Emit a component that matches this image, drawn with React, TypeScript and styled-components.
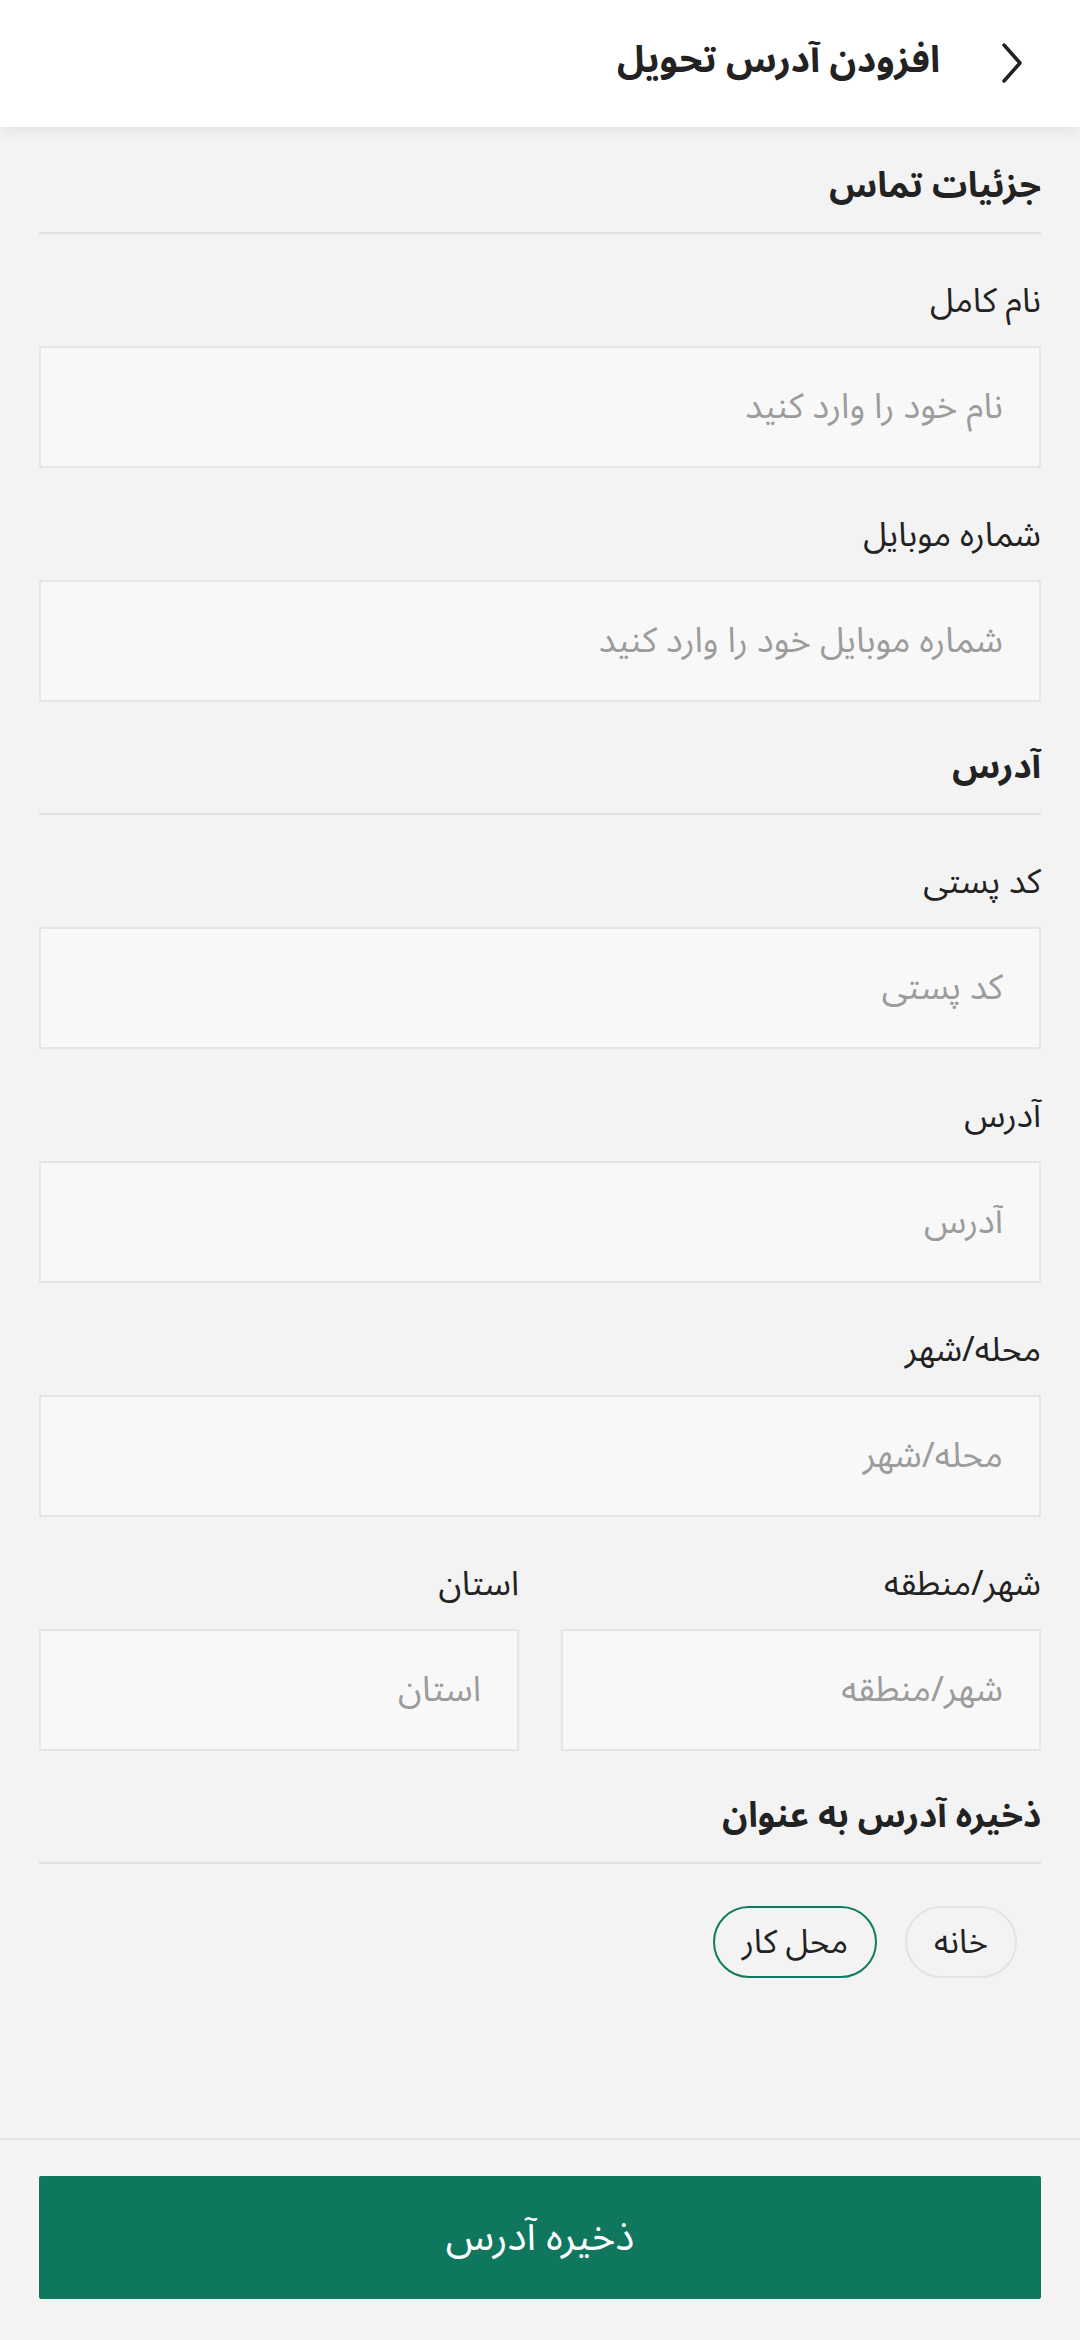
import React from "react";
import styled, { createGlobalStyle } from "styled-components";

const Global = createGlobalStyle`
  html, body { margin: 0; padding: 0; background: #f3f3f3; }
  body { font-family: "Noto Sans Arabic", "DejaVu Sans", "Noto Sans", sans-serif; }
  * { box-sizing: border-box; }
`;

const Page = styled.div`
  direction: rtl;
  min-height: 100vh;
  display: flex;
  flex-direction: column;
  background: #f3f3f3;
  color: #222;
`;

const Header = styled.header`
  height: 127px;
  background: #fff;
  display: flex;
  align-items: center;
  padding: 0 54px 8px 0;
  gap: 58px;
  box-shadow: 0 4px 14px rgba(0, 0, 0, 0.07);
  position: relative;
  z-index: 1;
`;

const BackButton = styled.button`
  border: 0;
  background: none;
  padding: 0;
  margin-top: 6px;
  width: 28px;
  height: 44px;
  display: flex;
  align-items: center;
  justify-content: center;
  color: #222;
`;

const HeaderTitle = styled.h1`
  margin: 0;
  font-size: 37px;
  font-weight: 700;
  line-height: 50px;
  color: #222;
`;

const Main = styled.main`
  flex: 1;
  padding: 0 39px 40px;
  display: flex;
  flex-direction: column;
`;

const SectionTitle = styled.h2<{ $first?: boolean }>`
  margin: 0;
  padding: ${(p) => (p.$first ? "36px" : "42px")} 0 23px;
  font-size: 35px;
  font-weight: 700;
  line-height: 46px;
  border-bottom: 2px solid #e2e2e2;
`;

const Field = styled.label`
  display: flex;
  flex-direction: column;
  gap: 25px;
  margin-top: 47px;
  min-width: 0;
`;

const LabelText = styled.span`
  font-size: 34px;
  line-height: 40px;
  color: #222;
`;

const Input = styled.input`
  height: 122px;
  width: 100%;
  border: 2px solid #e6e6e6;
  background: #f8f8f8;
  padding: 0 36px;
  font-family: inherit;
  font-size: 35px;
  color: #222;
  direction: rtl;
  outline: none;
  &::placeholder {
    color: #9c9c9c;
  }
`;

const Row = styled.div`
  display: grid;
  grid-template-columns: 1fr 1fr;
  column-gap: 42px;
`;

const Chips = styled.div`
  display: flex;
  gap: 28px;
  padding: 42px 24px 0 0;
`;

const Chip = styled.button<{ $active?: boolean }>`
  height: 72px;
  padding: 0 27px;
  border-radius: 36px;
  border: 2px solid ${(p) => (p.$active ? "#0f7a60" : "#e3e3e3")};
  background: transparent;
  font-family: inherit;
  font-size: 33px;
  color: #222;
`;

const Footer = styled.footer`
  border-top: 2px solid #e4e4e4;
  padding: 36px 39px 41px;
`;

const SaveButton = styled.button`
  width: 100%;
  height: 123px;
  border: 0;
  border-radius: 2px;
  background: #0e775e;
  color: #fff;
  font-family: inherit;
  font-size: 40px;
`;

const TextField = ({ label, placeholder }: { label: string; placeholder: string }) => (
  <Field>
    <LabelText>{label}</LabelText>
    <Input placeholder={placeholder} />
  </Field>
);

export default function App() {
  return (
    <>
      <Global />
      <Page>
        <Header>
          <BackButton aria-label="back">
            <svg width="24" height="42" viewBox="0 0 24 42" fill="none">
              <polyline points="4,3 20,21 4,39" stroke="#222" strokeWidth="3.5" strokeLinecap="round" strokeLinejoin="round" />
            </svg>
          </BackButton>
          <HeaderTitle>افزودن آدرس تحویل</HeaderTitle>
        </Header>
        <Main>
          <SectionTitle $first>جزئیات تماس</SectionTitle>
          <TextField label="نام کامل" placeholder="نام خود را وارد کنید" />
          <TextField label="شماره موبایل" placeholder="شماره موبایل خود را وارد کنید" />
          <SectionTitle>آدرس</SectionTitle>
          <TextField label="کد پستی" placeholder="کد پستی" />
          <TextField label="آدرس" placeholder="آدرس" />
          <TextField label="محله/شهر" placeholder="محله/شهر" />
          <Row>
            <TextField label="شهر/منطقه" placeholder="شهر/منطقه" />
            <TextField label="استان" placeholder="استان" />
          </Row>
          <SectionTitle>ذخیره آدرس به عنوان</SectionTitle>
          <Chips>
            <Chip>خانه</Chip>
            <Chip $active>محل کار</Chip>
          </Chips>
        </Main>
        <Footer>
          <SaveButton>ذخیره آدرس</SaveButton>
        </Footer>
      </Page>
    </>
  );
}
